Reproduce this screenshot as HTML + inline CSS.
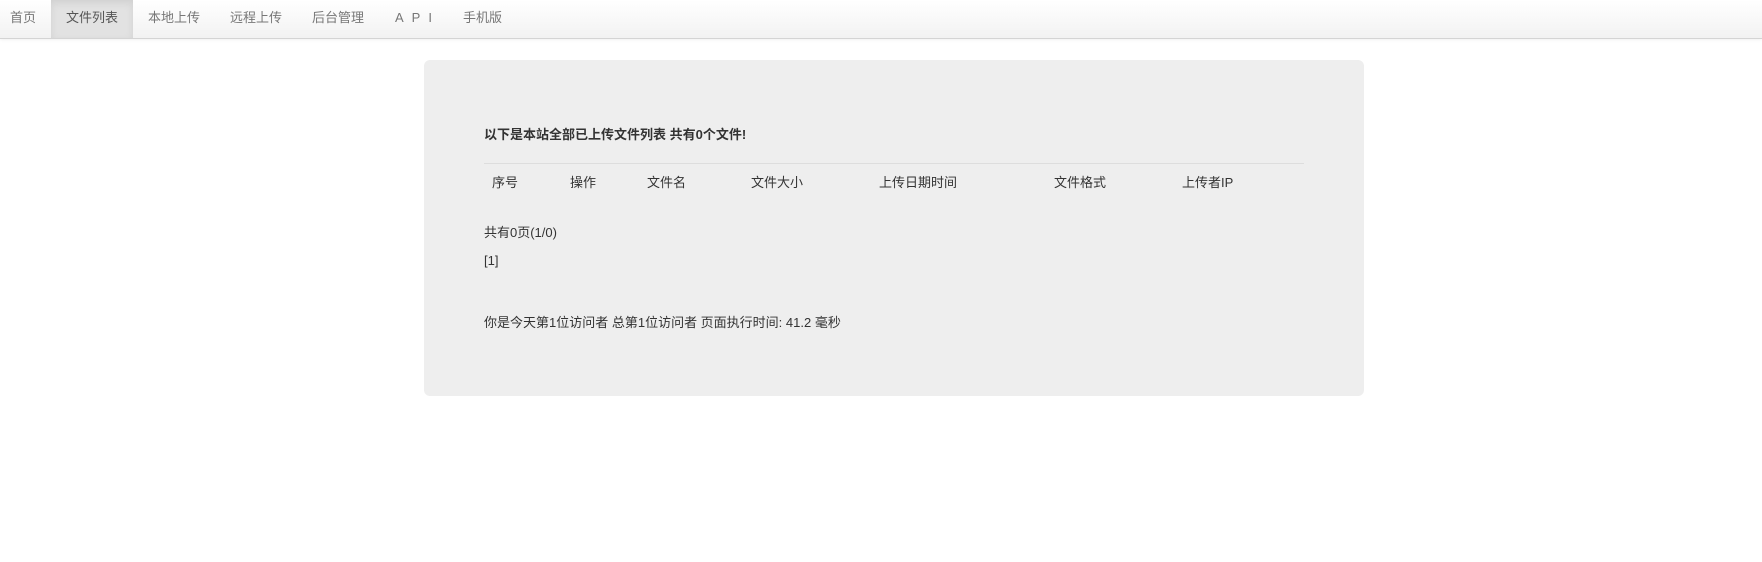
<!DOCTYPE html>
<html><head><meta charset="utf-8"><style>
body{margin:0;background:#fff;font-family:"Liberation Sans","Noto Sans CJK SC",sans-serif;color:#333;width:1762px;height:562px;overflow:hidden;position:relative}
.nav{position:absolute;left:0;top:0;width:1762px;height:38px;background:linear-gradient(#fff,#f2f2f2);border-bottom:1px solid #d4d4d4;box-shadow:0 1px 3px rgba(0,0,0,.06)}
.nav a{position:absolute;top:0;height:38px;line-height:35px;font-size:13px;color:#777;text-decoration:none;padding:0 15px;white-space:nowrap}
.nav a.act{background:#e2e2e2;color:#555;box-shadow:inset 0 3px 8px rgba(0,0,0,.08)}
.panel{position:absolute;left:424px;top:60px;width:940px;height:336px;background:#eee;border-radius:6px}
.t{position:absolute;font-size:13px;white-space:nowrap;color:#333}
.line{position:absolute;left:484px;top:163px;width:820px;height:1px;background:#ddd}
</style></head><body>
<div class="nav">
<a style="left:-5px">首页</a>
<a class="act" style="left:51px">文件列表</a>
<a style="left:133px">本地上传</a>
<a style="left:215px">远程上传</a>
<a style="left:297px">后台管理</a>
<a style="left:380px;letter-spacing:8px">API</a>
<a style="left:448px">手机版</a>
</div>
<div class="panel"></div>
<div class="t" style="left:484px;top:124px;font-weight:bold">以下是本站全部已上传文件列表 共有0个文件!</div>
<div class="line"></div>
<div class="t" style="left:492px;top:172px">序号</div>
<div class="t" style="left:570px;top:172px">操作</div>
<div class="t" style="left:647px;top:172px">文件名</div>
<div class="t" style="left:751px;top:172px">文件大小</div>
<div class="t" style="left:879px;top:172px">上传日期时间</div>
<div class="t" style="left:1054px;top:172px">文件格式</div>
<div class="t" style="left:1182px;top:172px">上传者IP</div>
<div class="t" style="left:484px;top:222px">共有0页(1/0)</div>
<div class="t" style="left:484px;top:253px">[1]</div>
<div class="t" style="left:484px;top:312px">你是今天第1位访问者 总第1位访问者 页面执行时间: 41.2 毫秒</div>
</body></html>
